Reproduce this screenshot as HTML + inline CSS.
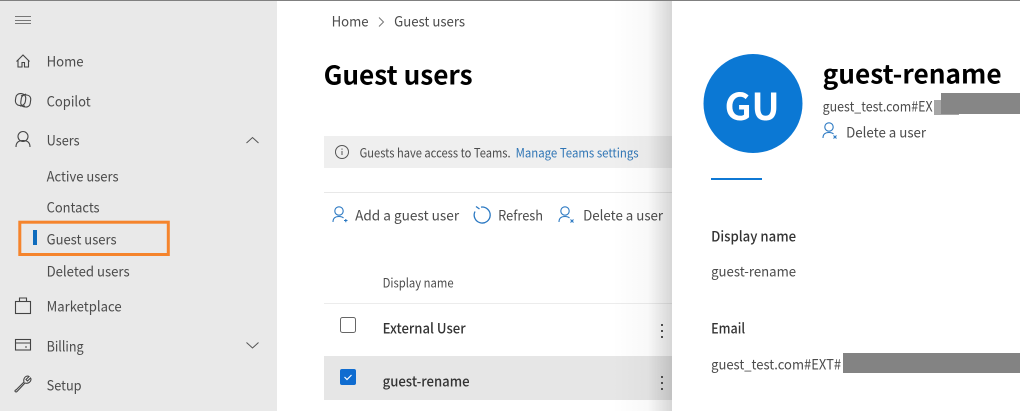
<!DOCTYPE html>
<html><head><meta charset="utf-8"><style>
html,body{margin:0;padding:0;width:1020px;height:411px;overflow:hidden;background:#fff}
svg{display:block;filter:blur(.3px)}
text{font-family:"Noto Sans CJK JP","Liberation Sans",sans-serif;font-size:14px;fill:#4c4c4c;transform:translate(-.4px,.6px)}
.b{font-weight:700;fill:#000}
.m{font-weight:500;fill:#333}
.i{fill:none;stroke:#444;stroke-width:1.1}
.u{fill:none;stroke:#2a78c2;stroke-width:1.1}
</style></head><body>
<svg width="1020" height="411" viewBox="0 0 1020 411" xmlns="http://www.w3.org/2000/svg">
<defs>
<linearGradient id="sh" x1="0" x2="1" y1="0" y2="0"><stop offset="0" stop-color="#000" stop-opacity="0"/><stop offset="0.6" stop-color="#000" stop-opacity="0.025"/><stop offset="1" stop-color="#000" stop-opacity="0.16"/></linearGradient>
</defs>
<rect width="1020" height="411" fill="#fff"/>
<rect x="0" y="0" width="277" height="411" fill="#e9e9e9"/>
<rect x="0" y="0" width="1020" height="1" fill="#808080"/>

<!-- hamburger -->
<path d="M15 16.500h16M15 20.500h16M15 23.500h16" stroke="#777" stroke-width="1"/>

<!-- home -->
<path class="i" d="M16.500 61.500l6.500-6.500 6.500 6.500M18 60v7h4v-4.500h2.500V67h4v-7"/>
<!-- copilot -->
<g class="i"><rect x="15.500" y="93.500" width="10" height="12" rx="4.500" transform="rotate(8 20 100)"/><rect x="21" y="95" width="9.500" height="12" rx="4" transform="rotate(8 26 101)"/><path d="M21 96l5-2M20 106l5 0"/></g>
<!-- user -->
<g class="i"><circle cx="23" cy="136.500" r="5"/><path d="M16 147c0-5 3-6.500 7-6.500s7 1.500 7 6.500"/></g>
<!-- bag -->
<g class="i"><rect x="15.500" y="301.500" width="15" height="12"/><path d="M19.500 301.500v-3.500h7v3.500"/></g>
<!-- wallet -->
<g class="i"><rect x="15.500" y="339.500" width="15" height="10.500"/><path d="M15.500 343h15M25 347h2"/></g>
<!-- wrench -->
<path class="i" d="M16 390l8-8c-1-3 1-6 4-6l1 .5-3 3 1.500 1.500 3-3 .5 1c0 3-3 5-6 4l-8 8.500c-1 1-3 0-1.500-1.500z"/>
<!-- chevrons -->
<path d="M246.500 143l6-5.500 6 5.500" fill="none" stroke="#555" stroke-width="1"/>
<path d="M246.500 342.500l6 5.500 6-5.500" fill="none" stroke="#555" stroke-width="1"/>

<text x="47" y="66" textLength="37" lengthAdjust="spacingAndGlyphs">Home</text>
<text x="47" y="106" textLength="44" lengthAdjust="spacingAndGlyphs">Copilot</text>
<text x="47" y="145" textLength="33" lengthAdjust="spacingAndGlyphs">Users</text>
<text x="47" y="181" textLength="72" lengthAdjust="spacingAndGlyphs">Active users</text>
<text x="47" y="212" textLength="53" lengthAdjust="spacingAndGlyphs">Contacts</text>
<text x="47" y="244" textLength="70" lengthAdjust="spacingAndGlyphs">Guest users</text>
<text x="47" y="276" textLength="83" lengthAdjust="spacingAndGlyphs">Deleted users</text>
<text x="47" y="311" textLength="75" lengthAdjust="spacingAndGlyphs">Marketplace</text>
<text x="47" y="351" textLength="37" lengthAdjust="spacingAndGlyphs">Billing</text>
<text x="47" y="390" textLength="35" lengthAdjust="spacingAndGlyphs">Setup</text>

<rect x="33" y="230" width="4" height="15" fill="#0f6cbd"/>
<rect x="19.800" y="222.200" width="148.500" height="32.300" fill="none" stroke="#f5842c" stroke-width="3"/>

<!-- main -->
<text x="332" y="26" textLength="37" lengthAdjust="spacingAndGlyphs">Home</text>
<path d="M379 17.500l4.500 4.500-4.500 4.500" fill="none" stroke="#777" stroke-width="1"/>
<text x="394.500" y="26" textLength="71" lengthAdjust="spacingAndGlyphs">Guest users</text>
<text class="b" x="324" y="84" textLength="149" lengthAdjust="spacingAndGlyphs" style="font-size:26px">Guest users</text>

<rect x="324" y="136" width="348" height="32" fill="#efefef"/>
<circle cx="342" cy="152" r="6.500" fill="none" stroke="#555" stroke-width="1"/>
<path d="M342 151v4M342 148.500v1.200" stroke="#555" stroke-width="1"/>
<text x="360" y="157" textLength="151" lengthAdjust="spacingAndGlyphs" style="font-size:12.500px">Guests have access to Teams.</text>
<text x="516" y="157" textLength="123" lengthAdjust="spacingAndGlyphs" style="font-size:12.500px;fill:#2f75b5">Manage Teams settings</text>

<rect x="324" y="192" width="348" height="1" fill="#e8e8e8"/>
<g class="u"><circle cx="339" cy="211" r="4.200"/><path d="M333 222c0-4 2.500-5.500 6-5.500 2 0 3.500.5 4.500 1.500"/><path d="M344 220.500h3.500M345.800 219v3.200"/></g>
<text x="355.500" y="220" textLength="104" lengthAdjust="spacingAndGlyphs">Add a guest user</text>
<path class="u" style="stroke-width:1.300" d="M481 207.100a8 8 0 1 1-6 4.400M476 206.500l3.500 2.500"/>
<text x="498.500" y="220" textLength="45" lengthAdjust="spacingAndGlyphs">Refresh</text>
<g class="u"><circle cx="565" cy="211" r="4.200"/><path d="M559 222c0-4 2.500-5.500 6-5.500 2 0 3.500.5 4.500 1.500"/><path d="M570.500 219.500l3 3M573.500 219.500l-3 3"/></g>
<text x="583.500" y="220" textLength="80" lengthAdjust="spacingAndGlyphs">Delete a user</text>

<text x="383" y="287" textLength="71" lengthAdjust="spacingAndGlyphs" style="font-size:12.500px">Display name</text>
<rect x="324" y="303" width="348" height="1" fill="#ececec"/>
<rect x="340.500" y="317.500" width="15" height="15" rx="2" fill="#fff" stroke="#666" stroke-width="1"/>
<text class="m" x="383" y="333" textLength="83" lengthAdjust="spacingAndGlyphs">External User</text>
<g fill="#555"><rect x="661" y="324" width="2" height="2"/><rect x="661" y="330" width="2" height="2"/><rect x="661" y="336" width="2" height="2"/></g>
<rect x="324" y="356" width="348" height="44" fill="#e6e6e6"/>
<rect x="340" y="369" width="16" height="16" rx="2" fill="#0f6cd0"/>
<path d="M344.500 377l2.500 2.500 4.500-4.500" fill="none" stroke="#fff" stroke-width="1.200"/>
<text class="m" x="383" y="386" textLength="87" lengthAdjust="spacingAndGlyphs">guest-rename</text>
<g fill="#555"><rect x="661" y="376" width="2" height="2"/><rect x="661" y="382" width="2" height="2"/><rect x="661" y="388" width="2" height="2"/></g>

<!-- panel shadow -->
<rect x="612" y="1" width="60" height="410" fill="url(#sh)"/>
<rect x="672" y="1" width="348" height="410" fill="#fff"/>

<circle cx="753" cy="103.500" r="49.500" fill="#0b78d4"/>
<text x="725" y="119.500" textLength="55" lengthAdjust="spacingAndGlyphs" style="font-size:37px;font-weight:700;fill:#fff">GU</text>
<text class="b" x="823" y="83" textLength="179" lengthAdjust="spacingAndGlyphs" style="font-size:26px">guest-rename</text>
<text x="823" y="111" textLength="110" lengthAdjust="spacingAndGlyphs">guest_test.com#EX</text>
<rect x="934" y="100" width="25" height="15" fill="#a6a6a6"/>
<rect x="941" y="93" width="79" height="21" fill="#868686"/>
<g class="u"><circle cx="829" cy="127" r="4.200"/><path d="M823 138c0-4 2.500-5.500 6-5.500 2 0 3.500.5 4.500 1.500"/><path d="M833.500 135.500l3 3M836.500 135.500l-3 3"/></g>
<text x="846.500" y="137" textLength="80" lengthAdjust="spacingAndGlyphs">Delete a user</text>
<rect x="711" y="178" width="51" height="2" fill="#0f78d4"/>

<text class="m" x="711.500" y="241" textLength="85" lengthAdjust="spacingAndGlyphs">Display name</text>
<text x="711.500" y="276" textLength="85" lengthAdjust="spacingAndGlyphs">guest-rename</text>
<text class="m" x="711.500" y="333" textLength="34" lengthAdjust="spacingAndGlyphs">Email</text>
<text x="711.500" y="369" textLength="130" lengthAdjust="spacingAndGlyphs">guest_test.com#EXT#</text>
<rect x="843" y="353" width="177" height="20" fill="#838383"/>
</svg>
</body></html>
